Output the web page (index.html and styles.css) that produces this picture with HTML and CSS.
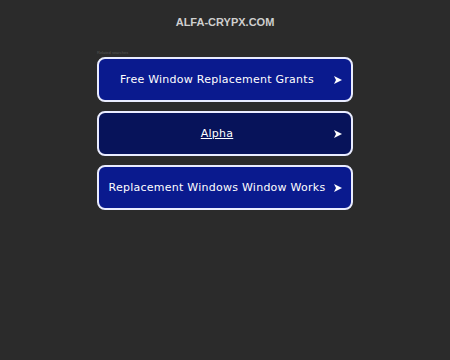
FILE: index.html
```html
<!DOCTYPE html>
<html>
<head>
<meta charset="utf-8">
<link rel="stylesheet" href="styles.css">
</head>
<body>
<header class="site-title">ALFA-CRYPX.COM</header>
<main class="links">
  <div class="label">Related searches</div>
  <a class="item item-blue" href="#"><span class="text"><span>Free Window Replacement Grants</span></span><span class="arrow"><svg width="8" height="8" viewBox="0 0 8 8"><polygon points="0,0 8,4 0,8 2,4" fill="#fff"/></svg></span></a>
  <a class="item item-dark" href="#"><span class="text"><span class="underline">Alpha</span></span><span class="arrow"><svg width="8" height="8" viewBox="0 0 8 8"><polygon points="0,0 8,4 0,8 2,4" fill="#fff"/></svg></span></a>
  <a class="item item-blue" href="#"><span class="text"><span>Replacement Windows Window Works</span></span><span class="arrow"><svg width="8" height="8" viewBox="0 0 8 8"><polygon points="0,0 8,4 0,8 2,4" fill="#fff"/></svg></span></a>
</main>
</body>
</html>
```
FILE: styles.css
```css
html, body {
  margin: 0;
  padding: 0;
  background: #2b2b2b;
  height: 100%;
}
body {
  font-family: "DejaVu Sans", sans-serif;
}
.site-title {
  font-family: "Liberation Sans", Arial, sans-serif;
  font-weight: bold;
  font-size: 11px;
  color: #cfcfcf;
  text-align: center;
  padding-top: 16px;
  height: 13px;
  line-height: 13px;
}
.links {
  width: 256px;
  margin: 22px auto 0;
  display: flex;
  flex-direction: column;
  gap: 9px;
}
.label {
  font-family: "Liberation Sans", Arial, sans-serif;
  font-size: 4px;
  line-height: 4px;
  color: #555;
  margin-bottom: -7px;
  height: 4px;
}
.item {
  box-sizing: border-box;
  height: 45px;
  border: 2px solid #e9ecff;
  border-radius: 8px;
  display: flex;
  align-items: center;
  padding: 0 9px 0 12px;
  text-decoration: none;
  color: #ffffff;
}
.item-blue { background: #0a1a8e; }
.item-dark { background: #07135a; }
.text {
  flex: 1;
  min-width: 0;
  display: flex;
  justify-content: center;
  font-size: 11px;
  letter-spacing: 0.25px;
  white-space: nowrap;
}
.underline { text-decoration: underline; }
.arrow {
  width: 19px;
  flex: none;
  display: flex;
  justify-content: flex-end;
}
.arrow svg { display: block; }
```
